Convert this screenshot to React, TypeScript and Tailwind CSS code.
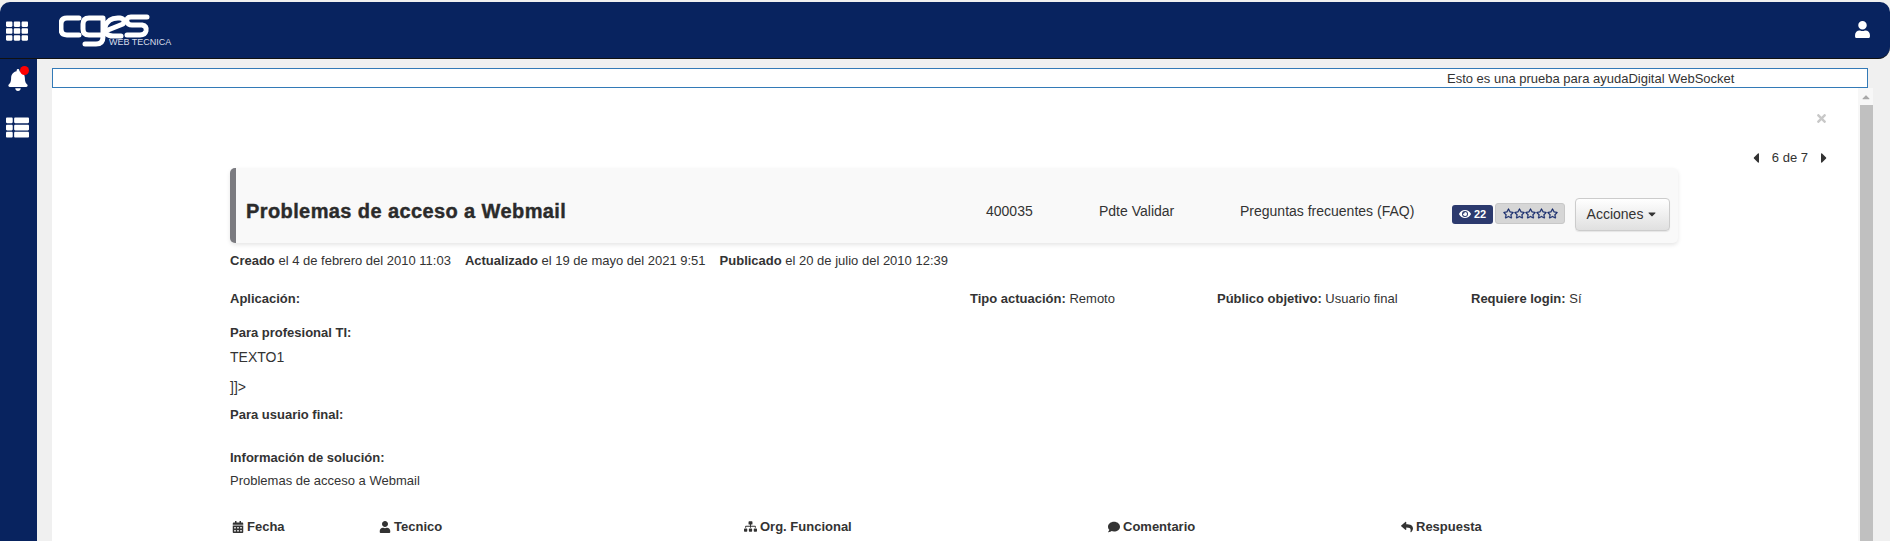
import React from "react";
import {
  FaTh, FaBell, FaThList, FaUser, FaCalendarAlt, FaSitemap, FaComment, FaReply, FaEye, FaRegStar, FaTimes, FaCaretLeft, FaCaretRight, FaCaretDown, FaCaretUp,
} from "react-icons/fa";

function Logo() {
  return (
    <div className="relative w-[115px] h-[36px]">
      <svg width="92" height="34" viewBox="0 0 92 34" fill="none" stroke="#ffffff" strokeWidth="5" strokeLinecap="round" strokeLinejoin="round">
        <path d="M20 4 H8 Q2 4 2 10 V15 Q2 21 8 21 H20" />
        <path d="M44 4 H30 Q24 4 24 10 V15 Q24 21 30 21 H42 M44 4 V23 Q44 30 37 30 H26" />
        <path d="M49 16 L64 10 Q67 5 61 4 Q49 3 46 13 Q45 22 54 22 H62" />
        <path d="M88 3 H72 Q67 3 68 8 Q69 11 73 11 H83 Q88 12 87 17 Q86 21 81 21 H68" />
      </svg>
      <span className="absolute left-[50px] top-[23px] text-[9px] leading-[10px] font-light text-[#d8deea] whitespace-nowrap font-['Liberation_Sans',sans-serif]">
        WEB TECNICA
      </span>
    </div>
  );
}

function Scrollbar() {
  return (
    <div className="w-[15px] shrink-0 bg-[#f7f7f7] flex flex-col items-center">
      <div className="h-[17px] w-full flex items-center justify-center text-[#a8a8a8]">
        <FaCaretUp size={12} />
      </div>
      <div className="flex-1 w-[13px] ml-[2px] bg-[#c0c0c0]" />
    </div>
  );
}

function Label({ children }: { children: React.ReactNode }) {
  return <span className="font-bold">{children}</span>;
}

function Star() {
  return <FaRegStar size={11} className="stroke-[14]" />;
}

export default function App() {
  return (
    <div className="w-[1890px] h-[541px] overflow-hidden bg-[#f0f0f0] flex flex-col text-[13px] leading-[17px] text-[#333333] font-['Liberation_Sans',Arial,sans-serif]">
      <header className="h-[57px] shrink-0 mt-[2px] bg-[#08235f] rounded-t-[10px] rounded-br-[12px] border-b border-[#111111] flex items-center justify-between pl-[6px] pr-[19px] text-white">
        <div className="flex items-center">
          <FaTh size={22} className="mr-[31px] mt-[1px]" />
          <div className="mt-[3px]">
            <Logo />
          </div>
        </div>
        <FaUser size={17} className="-mt-[2px]" />
      </header>
      <div className="flex flex-1 min-h-0">
        <aside className="w-[37px] shrink-0 bg-[#08235f] text-white flex flex-col items-center pt-[8px]">
          <div className="relative h-[26px] -ml-[2px]">
            <FaBell size={22} className="mt-[2px]" />
            <span className="absolute -top-[1px] right-[0px] w-[9px] h-[9px] rounded-full bg-[#ff0000]" />
          </div>
          <FaThList size={23} className="mt-[23px] -ml-[2px]" />
        </aside>
        <main className="flex-1 min-w-0 flex flex-col pl-[15px] pr-[22px] pt-[9px]">
          <div className="h-[20px] shrink-0 w-[1816px] border border-[#337ab7] bg-white flex items-center pl-[1394px] text-[#333333] whitespace-nowrap">
            Esto es una prueba para ayudaDigital WebSocket
          </div>
          <div className="flex flex-1 min-h-0 w-[1821px]">
            <div className="flex-1 min-w-0 bg-white relative overflow-hidden">
              <div className="h-[23px]" />
              <div className="flex justify-end pr-[30px] text-[#c8c8c8] h-[14px] items-center">
                <FaTimes size={13} />
              </div>
              <div className="flex justify-end items-center pr-[26px] mt-[24px] h-[17px] text-[#333333]">
                <FaCaretLeft size={16} />
                <span className="mx-[8px]">6 de 7</span>
                <FaCaretRight size={16} />
              </div>
              <div className="ml-[178px] mr-[178px] mt-[2px]">
                <div className="h-[75px] mr-[2px] bg-[#f9f9f9] border-l-[6px] border-[#7b7b80] rounded-[5px] shadow-[0_2px_4px_rgba(0,0,0,0.1)] flex items-center relative">
                  <h1 className="text-[20px] leading-[24px] font-bold text-[#2b2b2b] tracking-[0.4px] [-webkit-text-stroke:0.4px_#2b2b2b] ml-[10px] mt-[10px] w-[740px] whitespace-nowrap">
                    Problemas de acceso a Webmail
                  </h1>
                  <span className="text-[14px] mt-[12px] w-[113px]">400035</span>
                  <span className="text-[14px] mt-[12px] w-[141px]">Pdte Validar</span>
                  <span className="text-[14px] mt-[12px] w-[212px]">Preguntas frecuentes (FAQ)</span>
                  <span className="mt-[17px] h-[19px] w-[41px] rounded-[3px] bg-[#2c3a6e] text-white text-[11px] font-bold flex items-center justify-center gap-[3px]">
                    <FaEye size={12} />22
                  </span>
                  <span className="mt-[16px] ml-[2px] h-[21px] w-[70px] rounded-[3px] bg-[#d6d6d6] border border-[#c8c8c8] text-[#14286b] flex items-center justify-center gap-0">
                    <Star /><Star /><Star /><Star /><Star />
                  </span>
                  <button className="mt-[17px] ml-[10px] h-[33px] w-[95px] rounded-[4px] border border-[#cccccc] bg-gradient-to-b from-white to-[#e0e0e0] text-[14px] text-[#333333] flex items-center justify-center gap-[3px] shadow-[0_1px_1px_rgba(0,0,0,0.08)]">
                    Acciones <FaCaretDown size={12} />
                  </button>
                </div>
                <p className="mt-[9px] whitespace-nowrap">
                  <Label>Creado</Label> el 4 de febrero del 2010 11:03
                  <span className="ml-[14px]"><Label>Actualizado</Label> el 19 de mayo del 2021 9:51</span>
                  <span className="ml-[14px]"><Label>Publicado</Label> el 20 de julio del 2010 12:39</span>
                </p>
                <div className="mt-[21px] flex h-[17px]">
                  <div className="w-[740px]"><Label>Aplicación:</Label></div>
                  <div className="w-[247px]"><Label>Tipo actuación:</Label> Remoto</div>
                  <div className="w-[254px]"><Label>Público objetivo:</Label> Usuario final</div>
                  <div><Label>Requiere login:</Label> Sí</div>
                </div>
                <p className="mt-[17px]"><Label>Para profesional TI:</Label></p>
                <p className="mt-[8px] text-[14px]">TEXTO1</p>
                <p className="mt-[13px] text-[14px]">]]&gt;</p>
                <p className="mt-[10px]"><Label>Para usuario final:</Label></p>
                <p className="mt-[26px]"><Label>Información de solución:</Label></p>
                <p className="mt-[6px]">Problemas de acceso a Webmail</p>
                <div className="mt-[29px] flex font-bold h-[17px]">
                  <div className="w-[149px] flex items-center gap-[3px] pl-[2px]"><FaCalendarAlt size={12} />Fecha</div>
                  <div className="w-[365px] flex items-center gap-[3px]"><FaUser size={12} />Tecnico</div>
                  <div className="w-[364px] flex items-center gap-[3px]"><FaSitemap size={13} />Org. Funcional</div>
                  <div className="w-[293px] flex items-center gap-[3px]"><FaComment size={12} />Comentario</div>
                  <div className="flex items-center gap-[3px]"><FaReply size={12} />Respuesta</div>
                </div>
              </div>
            </div>
            <Scrollbar />
          </div>
        </main>
      </div>
    </div>
  );
}
